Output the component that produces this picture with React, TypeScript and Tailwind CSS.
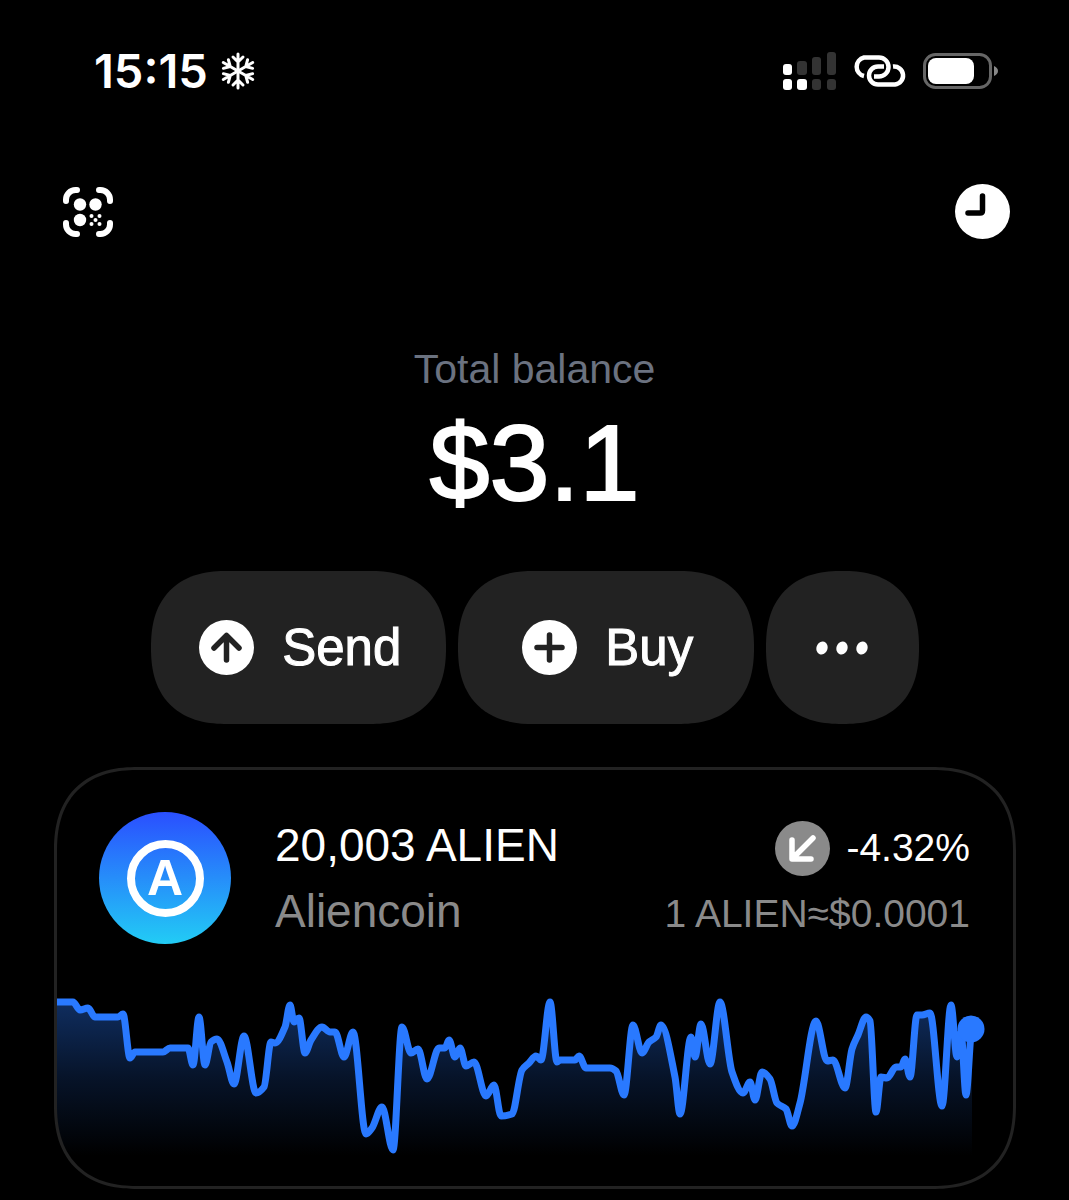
import type { ReactNode } from 'react'

type Point = [number, number]

const history: Point[] = [
  [55, 1002], [73, 1002], [80, 1010], [88, 1008], [95, 1017], [118, 1017], [123, 1014], [130, 1058],
  [135, 1052], [163, 1052], [170, 1048], [188, 1048], [193, 1065], [199, 1017], [205, 1065], [211, 1042],
  [217, 1039], [227, 1062], [234, 1084], [244, 1036], [256, 1093], [264, 1087], [271, 1042], [275, 1043],
  [285, 1027], [290, 1005], [294, 1022], [299, 1018], [305, 1053], [311, 1040], [322, 1027], [330, 1032],
  [335, 1032], [344, 1057], [353, 1032], [366, 1134], [372, 1128], [382, 1107], [393, 1150], [402, 1027],
  [411, 1053], [418, 1049], [427, 1079], [439, 1048], [445, 1048], [449, 1040], [455, 1057], [460, 1048],
  [466, 1066], [474, 1062], [486, 1096], [494, 1085], [501, 1116], [512, 1114], [522, 1070], [529, 1063],
  [536, 1056], [541, 1060], [550, 1002], [557, 1062], [560, 1060], [575, 1060], [579, 1056], [586, 1068],
  [610, 1068], [616, 1071], [624, 1095], [633, 1025], [642, 1053], [649, 1042], [656, 1037], [661, 1025],
  [675, 1077], [680, 1114], [691, 1037], [695, 1057], [701, 1024], [710, 1064], [720, 1002], [732, 1072],
  [743, 1093], [750, 1082], [755, 1100], [762, 1072], [770, 1079], [777, 1103], [786, 1109], [792, 1126],
  [800, 1103], [816, 1021], [827, 1061], [833, 1060], [845, 1088], [852, 1049], [858, 1035], [866, 1017],
  [870, 1021], [876, 1112], [881, 1077], [887, 1078], [896, 1067], [901, 1067], [905, 1059], [910, 1077],
  [917, 1015], [922, 1015], [930, 1013], [942, 1106], [951, 1005], [957, 1057], [961, 1032], [966, 1095],
  [972, 1029],
]

// Monotone cubic curve, so flat stretches and peaks do not overshoot
function toPath(points: Point[]) {
  const slopes = points.slice(1).map(([x, y], i) => (y - points[i][1]) / (x - points[i][0]))
  const tangents = points.map((_, i) => {
    if (i === 0 || i === points.length - 1) return 0
    const a = slopes[i - 1]
    const b = slopes[i]
    return a * b <= 0 ? 0 : (2 * a * b) / (a + b)
  })

  let d = `M${points[0][0]} ${points[0][1]}`
  for (let i = 1; i < points.length; i++) {
    const [x0, y0] = points[i - 1]
    const [x1, y1] = points[i]
    const h = (x1 - x0) / 3
    d += `C${x0 + h} ${y0 + tangents[i - 1] * h} ${x1 - h} ${y1 - tangents[i] * h} ${x1} ${y1}`
  }
  return d
}

function PriceChart() {
  const line = toPath(history)
  const [lastX, lastY] = history[history.length - 1]

  return (
    <svg viewBox="57 944 956 242" className="block w-full" role="img" aria-label="ALIEN price chart">
      <defs>
        <linearGradient id="area" x1="0" y1="1000" x2="0" y2="1156" gradientUnits="userSpaceOnUse">
          <stop offset="0" stopColor="#2979ff" stopOpacity="0.38" />
          <stop offset="0.5" stopColor="#2979ff" stopOpacity="0.16" />
          <stop offset="1" stopColor="#2979ff" stopOpacity="0" />
        </linearGradient>
      </defs>
      <path d={`${line}V1160H55Z`} fill="url(#area)" />
      <path d={line} fill="none" stroke="#2979ff" strokeWidth="7" strokeLinecap="round" strokeLinejoin="round" />
      <circle cx={lastX - 1} cy={lastY} r="13.5" fill="#2979ff" />
    </svg>
  )
}

function Snowflake() {
  return (
    <svg viewBox="-18 -19 36 38" className="h-[38px] w-9" aria-hidden="true">
      <g fill="none" stroke="#fff" strokeWidth="3" strokeLinecap="round" strokeLinejoin="round">
        {[0, 60, 120, 180, 240, 300].map((angle) => (
          <path key={angle} d="M0 0V-17M-5 -14L0 -9L5 -14" transform={`rotate(${angle})`} />
        ))}
      </g>
    </svg>
  )
}

function Signal() {
  return (
    <svg viewBox="0 0 54 38" className="h-[38px] w-[54px]" role="img" aria-label="Signal strength">
      <rect x="0" y="12" width="9" height="11" rx="3" fill="#fff" />
      <rect x="14" y="9" width="10" height="14" rx="3" fill="#333" />
      <rect x="29" y="5" width="9" height="18" rx="3" fill="#333" />
      <rect x="44" y="0" width="9" height="23" rx="3" fill="#333" />
      <rect x="0" y="27" width="9" height="11" rx="3" fill="#fff" />
      <rect x="14" y="27" width="10" height="11" rx="3" fill="#fff" />
      <rect x="29" y="27" width="9" height="11" rx="3" fill="#333" />
      <rect x="44" y="27" width="9" height="11" rx="3" fill="#333" />
    </svg>
  )
}

function Hotspot() {
  return (
    <svg viewBox="0 0 54 32" className="h-8 w-[54px]" role="img" aria-label="Personal hotspot">
      <g fill="none" stroke="#fff" strokeWidth="4.500">
        <path d="M11 21A9.500 9.500 0 0 1 11 2.500H26A9.500 9.500 0 0 1 26 21.500H21" />
        <path d="M31 11.500H25A9 9 0 0 0 25 29.500H42A9 9 0 0 0 40 11.500" />
      </g>
    </svg>
  )
}

function Battery() {
  return (
    <svg viewBox="0 0 76 36" className="h-9 w-[76px]" role="img" aria-label="Battery">
      <rect x="1.500" y="1.500" width="66" height="33" rx="11" fill="none" stroke="#666" strokeWidth="3" />
      <rect x="5" y="5" width="46" height="26" rx="8" fill="#fff" />
      <path d="M71 13Q75 15 75 18T71 23Z" fill="#888" />
    </svg>
  )
}

function ScanIcon() {
  return (
    <svg viewBox="0 0 50 50" className="size-[50px]" aria-hidden="true">
      <g fill="none" stroke="#fff" strokeWidth="6" strokeLinecap="round">
        <path d="M3 14V12.500A9.500 9.500 0 0 1 12.500 3H14" />
        <path d="M36 3H37.500A9.500 9.500 0 0 1 47 12.500V14" />
        <path d="M47 36V37.500A9.500 9.500 0 0 1 37.500 47H36" />
        <path d="M14 47H12.500A9.500 9.500 0 0 1 3 37.500V36" />
      </g>
      <g fill="#fff">
        <circle cx="17" cy="17.500" r="6.200" />
        <circle cx="32.500" cy="17.500" r="6.200" />
        <circle cx="17" cy="33" r="6.200" />
        <circle cx="32.500" cy="33" r="2" />
        <circle cx="28.500" cy="29" r="2" />
        <circle cx="36.500" cy="29" r="2" />
        <circle cx="28.500" cy="37" r="2" />
        <circle cx="36.500" cy="37" r="2" />
      </g>
    </svg>
  )
}

// White or grey disc with a stroked glyph on top
function DiscIcon({ fill = '#fff', stroke, d }: { fill?: string; stroke: string; d: string }) {
  return (
    <svg viewBox="0 0 55 55" className="size-[55px] shrink-0" aria-hidden="true">
      <circle cx="27.500" cy="27.500" r="27.500" fill={fill} />
      <path d={d} fill="none" stroke={stroke} strokeWidth="5.500" strokeLinecap="round" strokeLinejoin="round" />
    </svg>
  )
}

function ActionButton({ children }: { children: ReactNode }) {
  return (
    <button
      type="button"
      className="flex h-[153px] flex-1 items-center justify-center gap-7 rounded-[76px] bg-[#222] pl-1 text-[51px] leading-none text-white [-webkit-text-stroke:1px_white] [corner-shape:superellipse(1.25)]"
    >
      {children}
    </button>
  )
}

export default function App() {
  return (
    <div className="min-h-screen bg-black pb-[11px] font-['Liberation_Sans',Arial,sans-serif] text-white">
      <header>
        <div className="flex items-center justify-between pt-[47px] pr-[70px] pl-[94px]">
          <div className="flex items-center gap-3">
            <span className="font-['Inter',sans-serif] text-[47px] leading-[48px] font-semibold">15:15</span>
            <Snowflake />
          </div>
          <div className="flex items-center gap-4">
            <Signal />
            <Hotspot />
            <Battery />
          </div>
        </div>
        <div className="mt-[89px] flex items-center justify-between pr-[59px] pl-[63px]">
          <button type="button" aria-label="Scan code">
            <ScanIcon />
          </button>
          <button type="button" aria-label="History">
            <DiscIcon stroke="#000" d="M27.500 12V26.500Q27.500 29 25 29H13" />
          </button>
        </div>
      </header>

      <main>
        <section className="mt-[106px] text-center">
          <h1 className="text-[41px] leading-[48px] text-[#6b7280]">Total balance</h1>
          <p className="mt-[10px] text-[108px] leading-[120px] [-webkit-text-stroke:2px_white]">$3.1</p>
        </section>

        <div className="mx-auto mt-12 flex max-w-[768px] gap-3">
          <ActionButton>
            <DiscIcon stroke="#222" d="M27.500 40V16M15 28L27.500 15.500L40 28" />
            Send
          </ActionButton>
          <ActionButton>
            <DiscIcon stroke="#222" d="M27.500 15V40M15 27.500H40" />
            Buy
          </ActionButton>
          <button
            type="button"
            aria-label="More"
            className="flex size-[153px] items-center justify-center rounded-[76px] bg-[#222] [corner-shape:superellipse(1.25)]"
          >
            <svg viewBox="0 0 52 14" className="h-[14px] w-[52px]" aria-hidden="true">
              <g fill="#fff">
                <ellipse cx="6" cy="7" rx="5.500" ry="6.700" transform="rotate(20 6 7)" />
                <ellipse cx="26" cy="7" rx="5.500" ry="6.700" transform="rotate(20 26 7)" />
                <ellipse cx="46" cy="7" rx="5.500" ry="6.700" transform="rotate(20 46 7)" />
              </g>
            </svg>
          </button>
        </div>

        <section className="mr-[53px] ml-[54px] mt-[43px] overflow-hidden rounded-[84px] border-3 border-[#222] [corner-shape:superellipse(1.25)]">
          <div className="flex pt-[42px] pr-[43px] pl-[42px]">
            <div className="flex size-[132px] shrink-0 items-center justify-center rounded-full bg-linear-to-b/srgb from-[#2a4fff] to-[#22ccf5]">
              <span className="flex size-[77px] items-center justify-center rounded-full border-8 border-white text-[50px] leading-none font-bold">
                A
              </span>
            </div>
            <div className="ml-11 flex-1">
              <h2 className="text-[46px] leading-[66px]">20,003 ALIEN</h2>
              <p className="text-[46px] leading-[66px] text-[#8a8a8a]">Aliencoin</p>
            </div>
            <div className="pt-[3px] text-right text-[39px] leading-[66px]">
              <p className="flex items-center justify-end gap-4">
                <DiscIcon fill="#8a8a8a" stroke="#fff" d="M38 17L18 37M17 19V38H36" />
                -4.32%
              </p>
              <p className="text-[#8a8a8a]">1 ALIEN≈$0.0001</p>
            </div>
          </div>
          <div className="-mt-[3px]">
            <PriceChart />
          </div>
        </section>
      </main>
    </div>
  )
}
